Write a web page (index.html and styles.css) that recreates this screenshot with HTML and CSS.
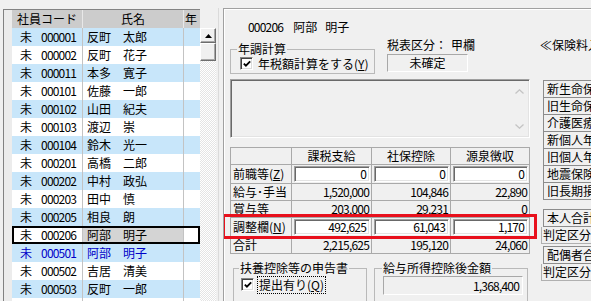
FILE: index.html
```html
<!DOCTYPE html>
<html lang="ja">
<head>
<meta charset="utf-8">
<title>年末調整</title>
<link rel="stylesheet" href="styles.css">
</head>
<body>
<div class="app">
  <section class="list">
    <div class="grid">
      <div class="ghead">
        <div class="rh"></div>
        <div class="hc code">社員コード</div>
        <div class="hc name">氏名</div>
        <div class="hc year">年</div>
      </div>
      <div class="row alt"><div class="rh"></div><div class="cell code"><span class="mi">未</span><span class="num">000001</span></div><div class="cell name">反町　太郎</div><div class="cell year"></div></div>
      <div class="row"><div class="rh"></div><div class="cell code"><span class="mi">未</span><span class="num">000002</span></div><div class="cell name">反町　花子</div><div class="cell year"></div></div>
      <div class="row alt"><div class="rh"></div><div class="cell code"><span class="mi">未</span><span class="num">000011</span></div><div class="cell name">本多　寛子</div><div class="cell year"></div></div>
      <div class="row"><div class="rh"></div><div class="cell code"><span class="mi">未</span><span class="num">000101</span></div><div class="cell name">佐藤　一郎</div><div class="cell year"></div></div>
      <div class="row alt"><div class="rh"></div><div class="cell code"><span class="mi">未</span><span class="num">000102</span></div><div class="cell name">山田　紀夫</div><div class="cell year"></div></div>
      <div class="row"><div class="rh"></div><div class="cell code"><span class="mi">未</span><span class="num">000103</span></div><div class="cell name">渡辺　崇</div><div class="cell year"></div></div>
      <div class="row alt"><div class="rh"></div><div class="cell code"><span class="mi">未</span><span class="num">000104</span></div><div class="cell name">鈴木　光一</div><div class="cell year"></div></div>
      <div class="row"><div class="rh"></div><div class="cell code"><span class="mi">未</span><span class="num">000201</span></div><div class="cell name">高橋　二郎</div><div class="cell year"></div></div>
      <div class="row alt"><div class="rh"></div><div class="cell code"><span class="mi">未</span><span class="num">000202</span></div><div class="cell name">中村　政弘</div><div class="cell year"></div></div>
      <div class="row"><div class="rh"></div><div class="cell code"><span class="mi">未</span><span class="num">000203</span></div><div class="cell name">田中　慎</div><div class="cell year"></div></div>
      <div class="row alt"><div class="rh"></div><div class="cell code"><span class="mi">未</span><span class="num">000205</span></div><div class="cell name">相良　朗</div><div class="cell year"></div></div>
      <div class="row sel"><div class="rh"></div><div class="cell code"><span class="mi">未</span><span class="num">000206</span></div><div class="cell name">阿部　明子</div><div class="cell year"></div></div>
      <div class="row alt dup"><div class="rh"></div><div class="cell code"><span class="mi">未</span><span class="num">000501</span></div><div class="cell name">阿部　明子</div><div class="cell year"></div></div>
      <div class="row"><div class="rh"></div><div class="cell code"><span class="mi">未</span><span class="num">000502</span></div><div class="cell name">吉居　清美</div><div class="cell year"></div></div>
      <div class="row alt"><div class="rh"></div><div class="cell code"><span class="mi">未</span><span class="num">000503</span></div><div class="cell name">反町　一郎</div><div class="cell year"></div></div>
      <div class="row"><div class="rh"></div><div class="cell code"></div><div class="cell name"></div><div class="cell year"></div></div>
    </div>
    <div class="vscroll">
      <div class="vs-space"></div>
      <div class="vs-btn"><svg width="7" height="4" viewBox="0 0 7 4"><path d="M3.5 0 L7 4 L0 4 Z" fill="#000"/></svg></div>
      <div class="vs-thumb"></div>
      <div class="vs-track"></div>
    </div>
  </section>

  <div class="splitter"></div>

  <section class="detail">
    <div class="main">
      <div class="emp"><span class="num">000206</span><span class="nm1">阿部</span><span class="nm2">明子</span></div>

      <div class="toprow">
        <fieldset class="gb nencho">
          <legend>年調計算</legend>
          <div class="chkrow">
            <span class="cb"><svg width="11" height="11" viewBox="0 0 11 11"><path d="M2 4.5 L4.3 6.8 L9 2.1" fill="none" stroke="#000" stroke-width="2"/></svg></span>
            <span class="chklabel">年税額計算をする(<u>Y</u>)</span>
          </div>
        </fieldset>
        <div class="taxkind">
          <div class="tk-label">税表区分：<span class="tk-val">甲欄</span></div>
          <div class="static">未確定</div>
        </div>
      </div>

      <div class="memo">
        <div class="memo-sb">
          <svg width="9" height="5" viewBox="0 0 9 5"><path d="M0.5 4.5 L4.5 0.8 L8.5 4.5" fill="none" stroke="#c4c4c4" stroke-width="1.3"/></svg>
          <svg width="9" height="5" viewBox="0 0 9 5"><path d="M0.5 0.5 L4.5 4.2 L8.5 0.5" fill="none" stroke="#c4c4c4" stroke-width="1.3"/></svg>
        </div>
      </div>

      <div class="calc">
        <div class="tc"></div>
        <div class="tc th">課税支給</div>
        <div class="tc th">社保控除</div>
        <div class="tc th">源泉徴収</div>

        <div class="tc lbl">前職等(<u>Z</u>)</div>
        <div class="tc"><div class="inp"><span class="num">0</span></div></div>
        <div class="tc"><div class="inp"><span class="num">0</span></div></div>
        <div class="tc"><div class="inp"><span class="num">0</span></div></div>

        <div class="tc lbl">給与･手当</div>
        <div class="tc val num">1,520,000</div>
        <div class="tc val num">104,846</div>
        <div class="tc val num">22,890</div>

        <div class="tc lbl">賞与等</div>
        <div class="tc val num">203,000</div>
        <div class="tc val num">29,231</div>
        <div class="tc val num">0</div>

        <div class="tc lbl">調整欄(<u>N</u>)</div>
        <div class="tc"><div class="inp"><span class="num">492,625</span></div></div>
        <div class="tc"><div class="inp"><span class="num">61,043</span></div></div>
        <div class="tc"><div class="inp"><span class="num">1,170</span></div></div>

        <div class="tc lbl">合計</div>
        <div class="tc val num">2,215,625</div>
        <div class="tc val num">195,120</div>
        <div class="tc val num">24,060</div>

        <div class="hilite"></div>
      </div>

      <div class="bottom">
        <fieldset class="gb fuyo">
          <legend>扶養控除等の申告書</legend>
          <div class="chkrow">
            <span class="cb"><svg width="11" height="11" viewBox="0 0 11 11"><path d="M2 4.5 L4.3 6.8 L9 2.1" fill="none" stroke="#000" stroke-width="2"/></svg></span>
            <span class="chklabel focus">提出有り(<u>Q</u>)</span>
          </div>
        </fieldset>
        <fieldset class="gb kyuyo">
          <legend>給与所得控除後金額</legend>
          <div class="static amount"><span class="num">1,368,400</span></div>
        </fieldset>
      </div>
    </div>

    <aside class="side">
      <div class="ins-title">≪保険料入力≫</div>
      <div class="btnlist">
        <div class="ib">新生命保険料</div>
        <div class="ib">旧生命保険料</div>
        <div class="ib">介護医療保険料</div>
        <div class="ib">新個人年金保険料</div>
        <div class="ib">旧個人年金保険料</div>
        <div class="ib">地震保険料</div>
        <div class="ib">旧長期損害保険料</div>
      </div>
      <div class="sumlist">
        <div class="sb">本人合計所得</div>
        <div class="sj">判定区分</div>
        <div class="sb sb2">配偶者合計所得</div>
        <div class="sj">判定区分</div>
      </div>
    </aside>
  </section>
</div>
</body>
</html>
```

FILE: styles.css
```css
* { box-sizing: border-box; }
html, body { margin: 0; padding: 0; }
body {
  width: 591px;
  height: 301px;
  overflow: hidden;
  background: #f0f0f0;
  font-family: "Noto Sans CJK JP", "Noto Sans", sans-serif;
  font-size: 12px;
  line-height: 14px;
  color: #000;
}
.num { letter-spacing: -0.8px; }
u { text-decoration: underline; text-underline-offset: 1px; }

.app {
  display: flex;
  height: 301px;
  padding-top: 8px;
}

/* ---------- employee list ---------- */
.list {
  display: flex;
  margin-left: 3px;
  margin-top: 1px;
  flex: none;
}
.grid {
  width: 197px;
  border-left: 1px solid #828282;
  border-top: 1px solid #828282;
  background: #fff;
}
.ghead { display: flex; height: 18px; }
.rh { width: 8px; flex: none; background: #ececec; }
.hc {
  background: #cccccc;
  border-right: 1px solid #e8e8e8;
  text-align: center;
  line-height: 18px;
  white-space: nowrap;
  overflow: hidden;
}
.code { width: 71px; flex: none; }
.name { width: 101px; flex: none; }
.year { width: 16px; flex: none; }
.hc.year { text-align: left; padding-left: 1px; border-right: none; }

.row { display: flex; height: 18px; line-height: 18px; position: relative; }
.row.alt .cell { background: #c8e6fa; }
.cell { border-right: 1px solid #c3c3c3; white-space: nowrap; overflow: hidden; }
.cell.year { border-right: none; }
.cell.code { padding-left: 8px; }
.cell .mi { margin-right: 9px; }
.cell.name { padding-left: 4px; }
.row.dup { color: #0000c8; }
.row.sel .cell.name { background: #d4d4d4; }
.row.sel::after {
  content: "";
  position: absolute;
  left: 8px; top: 0; right: 0; bottom: 0;
  border: 2px solid #000;
}

.vscroll {
  width: 16px;
  display: flex;
  flex-direction: column;
}
.vs-space { height: 19px; }
.vs-btn, .vs-thumb {
  background: #f0f0f0;
  border: 1px solid;
  border-color: #ffffff #6d6d6d #6d6d6d #ffffff;
  box-shadow: inset -1px -1px 0 #a8a8a8;
}
.vs-btn { height: 15px; display: flex; align-items: center; justify-content: center; }
.vs-thumb { height: 18px; }
.vs-track {
  flex: 1;
  background: repeating-conic-gradient(#ffffff 0 25%, #e4e4e4 0 50%) 0 0 / 2px 2px;
}

.splitter {
  width: 7px;
  flex: none;
  background: linear-gradient(to right, transparent 2px, #dadada 2px, #dadada 3px, transparent 3px);
}

/* ---------- detail ---------- */
.detail {
  flex: 1;
  min-width: 0;
  display: flex;
  border-left: 1px solid #a0a0a0;
  border-top: 1px solid #a0a0a0;
  box-shadow: inset 1px 1px 0 #fff;
  padding-left: 6px;
  overflow: hidden;
}
.main { width: 300px; flex: none; }

.emp { margin-top: 11px; padding-left: 18px; height: 14px; white-space: nowrap; }
.emp .nm1 { margin-left: 10px; }
.emp .nm2 { margin-left: 8px; }

.toprow { display: flex; margin-top: 4px; }

.gb {
  margin: 0;
  padding: 0 6px;
  min-width: 0;
  border: 1px solid #b9b9b9;
}
.gb legend { padding: 0 1px; line-height: 14px; }

.nencho { width: 145px; height: 32px; margin-top: 4px; }
.chkrow { display: flex; align-items: center; height: 15px; padding-left: 3px; }
.cb {
  width: 13px; height: 13px; flex: none;
  background: #fff;
  border: 1px solid;
  border-color: #848484 #ffffff #ffffff #848484;
  box-shadow: inset 1px 1px 0 #404040, inset -1px -1px 0 #dcdcdc;
  display: flex; align-items: center; justify-content: center;
}
.cb svg { display: block; margin: 1px 0 0 1px; }
.chklabel { margin-left: 5px; white-space: nowrap; }
.chklabel.focus { outline: 1px dotted #000; outline-offset: 1px; }

.taxkind { margin-left: 12px; width: 90px; }
.tk-label { height: 14px; white-space: nowrap; }
.tk-val { margin-left: 4px; }
.static {
  border: 1px solid;
  border-color: #a8a8a8 #ffffff #ffffff #a8a8a8;
  height: 18px;
  line-height: 16px;
}
.taxkind .static { width: 81px; margin-top: 2px; text-align: center; }

.memo {
  margin-top: 5px;
  height: 59px;
  border: 1px solid;
  border-color: #a0a0a0 #ffffff #ffffff #a0a0a0;
  box-shadow: inset 1px 1px 0 #696969, inset -1px -1px 0 #e3e3e3;
  display: flex;
  justify-content: flex-end;
  padding: 2px;
}
.memo-sb {
  width: 15px;
  display: flex;
  flex-direction: column;
  justify-content: space-between;
  align-items: center;
  padding: 7px 0 6px;
}
.memo-sb svg { display: block; }

.calc {
  position: relative;
  margin-top: 9px;
  display: grid;
  grid-template-columns: 61px 80px 79px 79px;
  grid-template-rows: 17px 19px 17px 17px 19px 17px;
  border-left: 1px solid #a9a9a9;
  border-top: 1px solid #a9a9a9;
}
.tc {
  border-right: 1px solid #a9a9a9;
  border-bottom: 1px solid #a9a9a9;
  white-space: nowrap;
  overflow: hidden;
}
.th { text-align: center; line-height: 16px; }
.lbl { padding-left: 2px; line-height: 18px; }
.calc .tc.lbl:nth-child(9), .calc .tc.lbl:nth-child(13), .calc .tc.lbl:nth-child(21) { line-height: 16px; }
.val { text-align: right; padding-right: 2px; line-height: 16px; }
.inp {
  margin: 1px 1px 0 2px;
  height: 16px;
  background: #fff;
  border: 1px solid;
  border-color: #a0a0a0 #ffffff #ffffff #a0a0a0;
  box-shadow: inset 1px 1px 0 #696969, inset -1px -1px 0 #e3e3e3;
  text-align: right;
  padding-right: 3px;
  line-height: 14px;
}
.hilite {
  position: absolute;
  left: -9px; top: 66px;
  width: 315px; height: 25px;
  border: 3px solid #e8101c;
  pointer-events: none;
}

.bottom { display: flex; margin-top: 7px; }
.fuyo { width: 134px; height: 50px; margin-left: 3px; padding: 0 5px; }
.kyuyo { width: 154px; height: 50px; margin-left: 7px; padding: 0 7px 0 7px; }
.fuyo .chkrow { padding-left: 2px; margin-top: 2px; }
.amount {
  margin-top: 1px;
  margin-left: 1px;
  width: 140px;
  height: 19px;
  line-height: 17px;
  text-align: right;
  padding-right: 3px;
}

/* ---------- side ---------- */
.side { width: 100px; flex: none; margin-left: 10px; padding-top: 29px; white-space: nowrap; overflow: hidden; }
.ins-title { height: 14px; }
.btnlist { margin-top: 28px; margin-left: 3px; }
.ib {
  height: 17px;
  border: 1px solid #8c8c8c;
  border-bottom: none;
  padding-left: 3px;
  line-height: 16px;
  overflow: hidden;
}
.ib:last-child { height: 18px; border-bottom: 1px solid #8c8c8c; }
.sumlist { margin-top: 9px; }
.sb {
  margin-left: 3px;
  height: 18px;
  border: 1px solid #8c8c8c;
  padding-left: 3px;
  line-height: 16px;
}
.sb2 { margin-top: 2px; }
.sj {
  margin-left: 1px;
  height: 17px;
  border: 1px solid #b0b0b0;
  border-top: none;
  padding-left: 1px;
  line-height: 16px;
}
```
